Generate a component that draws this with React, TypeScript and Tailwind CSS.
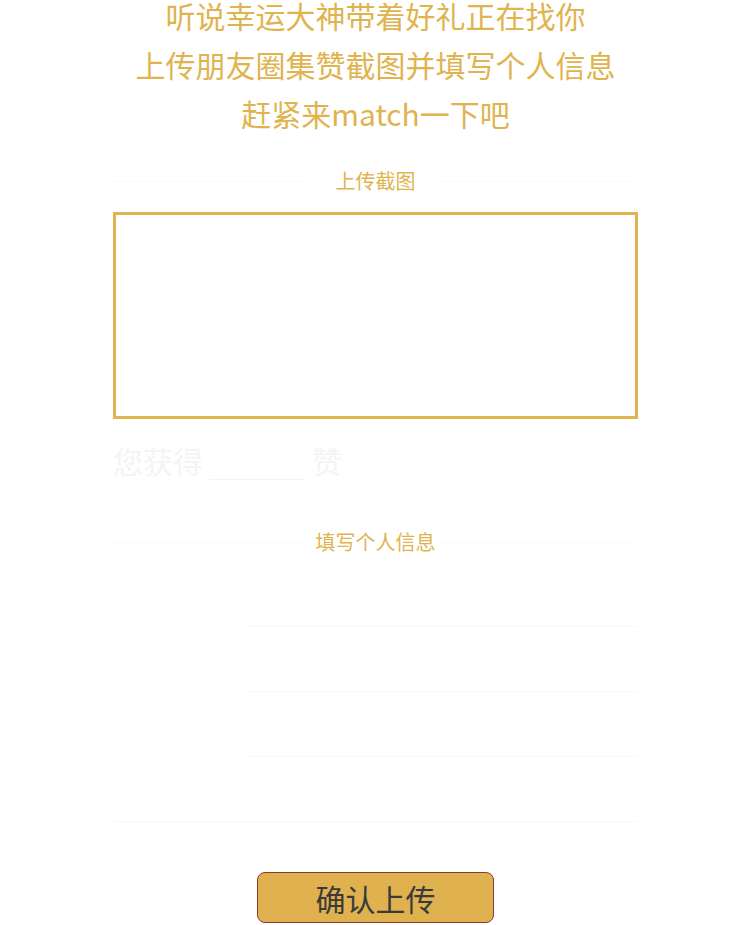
import React from 'react';

const font = { fontFamily: '"Noto Sans CJK SC", "Noto Sans", sans-serif' };

const SectionTitle: React.FC<{ label: string }> = ({ label }) => (
  <div className="flex items-center justify-between h-[28px]">
    <div className="w-[197px] border-t border-[#fafafa]" />
    <span className="text-[20px] leading-[28px] text-[#dfb44f]">{label}</span>
    <div className="w-[197px] border-t border-[#fafafa]" />
  </div>
);

const FormRow: React.FC<{ full?: boolean }> = ({ full }) => (
  <div className="flex h-[65px]">
    {!full && <div className="w-[135px] shrink-0" />}
    <div className="flex-1 border-b border-[#f7f7f7]" />
  </div>
);

const App: React.FC = () => {
  return (
    <div className="min-h-screen bg-white overflow-hidden" style={font}>
      <div className="w-[525px] mx-auto">
        <div className="flex flex-col gap-[19px] text-center text-[30px] leading-[30px] text-[#dfb44f] whitespace-nowrap">
          <div>听说幸运大神带着好礼正在找你</div>
          <div className="-mx-[10px]">上传朋友圈集赞截图并填写个人信息</div>
          <div>赶紧来match一下吧</div>
        </div>

        <div className="mt-[39px]">
          <SectionTitle label="上传截图" />
        </div>

        <div className="mt-[17px] h-[207px] border-[3px] border-[#e0b44f]" />

        <div className="mt-[21px] flex h-[40px] text-[30px] leading-[40px] text-[#f4f4f4]">
          <span>您获得</span>
          <span className="w-[95px] h-full mx-[6px] border-b border-[#f4f4f4]" />
          <span className="ml-[2px]">赞</span>
        </div>

        <div className="mt-[48px]">
          <SectionTitle label="填写个人信息" />
        </div>

        <div className="mt-[6px]">
          <FormRow />
          <FormRow />
          <FormRow />
          <FormRow full />
        </div>

        <div className="mt-[50px] flex justify-center">
          <button
            type="button"
            className="w-[237px] h-[51px] rounded-[8px] border border-[#8e3a2c] bg-[#dfb24f] text-[30px] leading-none text-[#3a3a3a]"
            style={font}
          >
            确认上传
          </button>
        </div>
      </div>
    </div>
  );
};

export default App;
